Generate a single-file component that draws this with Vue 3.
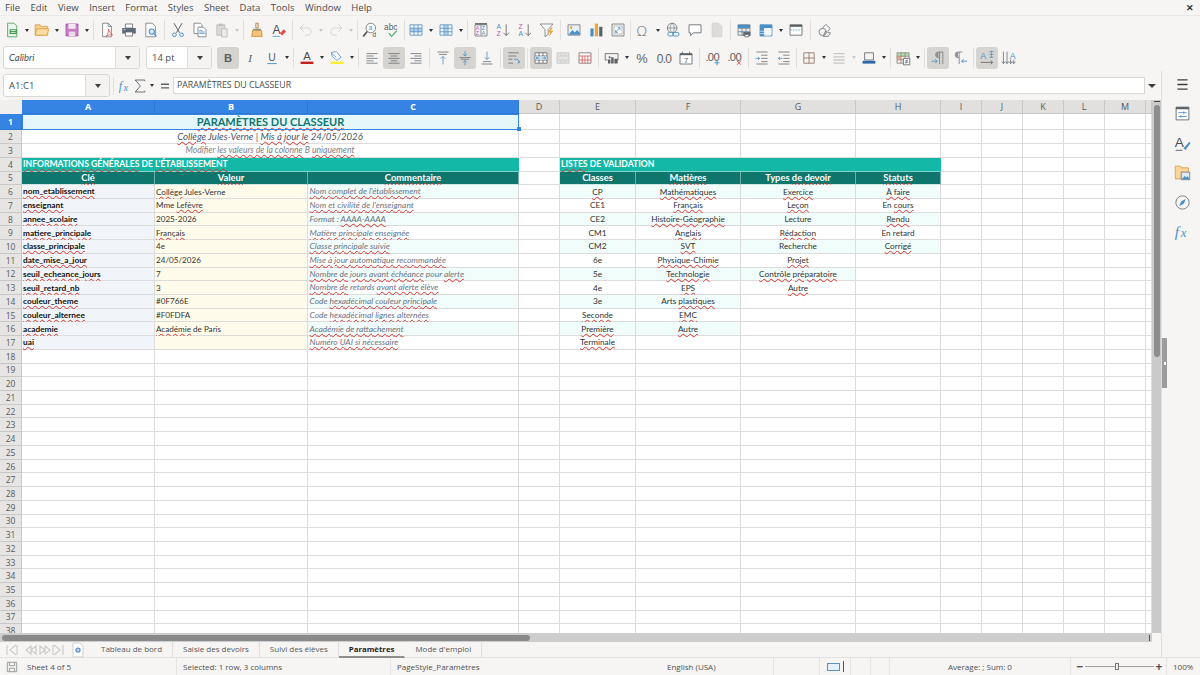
<template>
  <div class="app">
    <div class="menubar">
      <span v-for="m in menus" :key="m" class="menu">{{ m }}</span>
      <span class="close">&#x2715;</span>
    </div>

    <div class="toolbar tb1">
      <template v-for="(t, i) in bar1" :key="i">
        <span v-if="t.sep" class="sep" :style="{ margin: `0 ${t.sep}px` }"></span>
        <span v-else-if="t.a" class="drop" :class="{ dim: t.dim }"></span>
        <span v-else class="btn"><svg viewBox="0 0 20 20" v-html="icons[t.i]"></svg></span>
      </template>
    </div>

    <div class="toolbar tb2">
      <div class="combo font-box">
        <span class="combo-text italic">Calibri</span>
        <span class="combo-arrow"><i></i></span>
      </div>
      <div class="combo size-box">
        <span class="combo-text">14 pt</span>
        <span class="combo-arrow"><i></i></span>
      </div>
      <template v-for="(t, i) in bar2" :key="i">
        <span v-if="t.sep" class="sep" :style="{ margin: `0 ${t.sep}px` }"></span>
        <span v-else-if="t.a" class="drop" :class="{ dim: t.dim }"></span>
        <span v-else class="btn" :class="{ on: t.on }"><svg viewBox="0 0 20 20" v-html="icons[t.i]"></svg></span>
      </template>
    </div>

    <div class="main">
      <div class="workspace">
        <div class="formulabar">
          <div class="combo name-box">
            <span class="combo-text">A1:C1</span>
            <span class="combo-arrow"><i></i></span>
          </div>
          <span class="sep fsep"></span>
          <span class="btn fbtn"><svg viewBox="0 0 20 20" v-html="icons.fx"></svg></span>
          <span class="btn fbtn sumb"><svg viewBox="0 0 20 20" v-html="icons.sum"></svg></span>
          <span class="drop"></span>
          <span class="btn fbtn eqb"><svg viewBox="0 0 20 20" v-html="icons.equal"></svg></span>
          <div class="formula-input">PARAMÈTRES DU CLASSEUR</div>
          <span class="formula-drop"></span>
        </div>

        <div class="sheet-area">
          <div class="sheet">
            <div class="grow head-row">
              <div class="corner"></div>
              <div v-for="(c, i) in cols" :key="c" class="colhead" :class="{ sel: i < 3 }">{{ c }}</div>
              <div class="colhead rest"></div>
            </div>

            <div v-for="r in rows" :key="r.n" class="grow" :class="{ first: r.n === 1 }">
              <div class="rowhead" :class="{ sel: r.n === 1 }">{{ r.n }}</div>
              <div
                v-for="(c, i) in r.cells"
                :key="i"
                class="cell"
                :class="c.cls"
                :style="c.span ? { gridColumn: `span ${c.span}` } : null"
              >
                <span class="cell-text">
                  <template v-for="(p, j) in parts(c.t)" :key="j">
                    <span v-if="p.wavy" class="wavy">{{ p.s }}</span>
                    <template v-else>{{ p.s }}</template>
                  </template>
                </span>
                <span v-if="r.n === 1 && i === 0" class="handle"></span>
              </div>
            </div>
          </div>
          <div class="vscroll"><span class="vgrip"></span><span class="vthumb"></span></div>
        </div>

        <div class="hscroll"><span class="hthumb"></span><span class="hgrip"></span></div>
      </div>

      <div class="sidebar">
        <span v-for="s in sideIcons" :key="s" class="side-btn"><svg viewBox="0 0 20 20" v-html="icons[s]"></svg></span>
        <span class="side-grip"><i></i></span>
      </div>
    </div>

    <div class="tabbar">
      <div class="tab-nav">
        <svg viewBox="0 0 60 14">
          <g fill="none" stroke="#cfcdca" stroke-width="1.2">
            <path d="M2 2v10M11 2 5 7l6 5M12 2v10" />
            <path d="M26 3l-5 4 5 4zM31 3l-5 4 5 4z" />
            <path d="M35 3l5 4-5 4zM40 3l5 4-5 4z" />
            <path d="M49 2l6 5-6 5M48 2v10M58 2v10" />
          </g>
        </svg>
      </div>
      <span class="tab-add"><svg viewBox="0 0 12 16"><path d="M1 1h7l3 3v11H1z" fill="#fff" stroke="#d0cfcc" /><circle cx="6" cy="8" r="2.6" fill="#4f86c6" /><path d="M6 6.4v3.2M4.4 8h3.2" stroke="#fff" stroke-width=".8" /></svg></span>
      <div v-for="(t, i) in tabs" :key="t" class="tab" :class="{ active: i === 3 }">{{ t }}</div>
      <span class="tab-rest"></span>
    </div>

    <div class="statusbar">
      <span class="st st-save"><svg viewBox="0 0 14 14"><path d="M1.5 1.5h11v11h-11z" fill="none" stroke="#8b8d8f" /><path d="M4 2v3.5h6V2M4 12.5V8.500h6v4" fill="none" stroke="#8b8d8f" /></svg></span>
      <span class="st st-sheet">Sheet 4 of 5</span>
      <span class="st st-sel">Selected: 1 row, 3 columns</span>
      <span class="st st-page">PageStyle_Paramètres</span>
      <span class="st st-lang">English (USA)</span>
      <span class="st st-e0"></span>
      <span class="st st-mode"><i class="sel-rect"></i><i class="ibeam"></i></span>
      <span class="st st-e1"></span>
      <span class="st st-e2"></span>
      <span class="st st-sum">Average: ; Sum: 0</span>
      <span class="st st-zoom">
        <span class="zm">&minus;</span>
        <span class="zslider"><i></i></span>
        <span class="zm">+</span>
      </span>
      <span class="st-pct">100%</span>
    </div>
  </div>
</template>

<script setup>
const menus = ['File', 'Edit', 'View', 'Insert', 'Format', 'Styles', 'Sheet', 'Data', 'Tools', 'Window', 'Help']

const blue = '#4a90c8'
const dark = '#6a6e72'
const linesOf = (arr, c = dark) =>
  `<path d="${arr.map(([y, a, b]) => `M${a} ${y}H${b}`).join('')}" stroke="${c}" stroke-width="1" fill="none"/>`
const gridIcon = (c, hl = '') =>
  `<path d="M2.5 3.5h15v13h-15zM2.5 7.8h15M2.5 12.2h15M7.5 3.5v13M12.5 3.5v13" fill="${hl || 'none'}" stroke="${c}" stroke-width="1"/>`

const icons = {
  new: `<path d="M4.5 1.5h8l3.5 3.5v13.5H4.5z" fill="#e9f5ea" stroke="#4c9a55"/><path d="M7 9h9v6H7z" fill="#3f9a4b"/><path d="M8.5 10.5h6M8.5 13h6" stroke="#fff"/>`,
  open: `<path d="M1.5 5.5V3.5h6l1.5 2h8v11H1.500z" fill="#f7cf8e" stroke="#d89b47"/><path d="M1.5 16.5l2-8h15l-2 8z" fill="#fbdd9d" stroke="#d89b47"/>`,
  save: `<path d="M2.5 2.5h15v15h-15z" fill="#c77dc6" stroke="#a64fa8"/><path d="M5.5 2.5h9v6h-9z" fill="#f5e7f5"/><path d="M6 12h8v5.5H6z" fill="#eddaee"/>`,
  pdf: `<path d="M4.5 1.5h7l4 4v13h-11z" fill="#fff" stroke="#70767a"/><path d="M11.5 1.5v4h4" fill="none" stroke="#70767a"/><path d="M9 18c2-3 3-6 3-9 1 3 2 5 5 7-3-.5-5 0-8 2z" fill="none" stroke="#d9534f"/>`,
  print: `<path d="M5.5 2.5h9v5h-9z" fill="#fff" stroke="#666"/><path d="M1.5 7.5h17v7h-17z" fill="#5c6b77"/><path d="M5.5 12.5h9v5h-9z" fill="#fff" stroke="#666"/><path d="M3.5 9.500h2" stroke="#fff"/>`,
  preview: `<path d="M3.5 1.5h8l4 4v13h-12z" fill="#fff" stroke="#70767a"/><circle cx="11" cy="12" r="3.3" fill="#dcebf6" stroke="${blue}" stroke-width="1.3"/><path d="M13.5 14.5l3.5 3.5" stroke="${blue}" stroke-width="1.6"/>`,
  cut: `<path d="M5 1.5l7 12M15 1.5l-7 12" stroke="#5c6166" stroke-width="1.2" fill="none"/><circle cx="5.5" cy="16" r="2.3" fill="none" stroke="${blue}" stroke-width="1.2"/><circle cx="14.5" cy="16" r="2.3" fill="none" stroke="${blue}" stroke-width="1.2"/>`,
  copy: `<path d="M2.5 1.5h8l2 2v11h-10z" fill="#fff" stroke="#70767a"/><path d="M7.5 6.5h7l3 3v9h-10z" fill="#fff" stroke="#70767a"/>${linesOf([[10.5, 9, 13], [12.5, 9, 16], [14.5, 9, 16]], blue)}`,
  paste: `<path d="M3.5 3.5h10v13h-10z" fill="#d8d8d6" stroke="#b8b8b6"/><path d="M6 2h5v3H6z" fill="#c0c0be"/><path d="M9.5 8.5h7v10h-7z" fill="#eaeae8" stroke="#b8b8b6"/>`,
  brush: `<path d="M8.500 1.5h3v6h-3z" fill="#f7e8c8" stroke="#a77c3c"/><path d="M5 8.5h10v2H5z" fill="#8a8f94"/><path d="M4.5 10.5h11l1 7.5h-13z" fill="#f4c27a" stroke="#c98a2e"/>`,
  clear: `<text x="2" y="15" font-size="15" font-family="Liberation Sans" fill="#4a4f54">A</text><path d="M11 14l5-5 3 3-5 5z" fill="#e2504c"/><path d="M2 18h9" stroke="${blue}"/>`,
  undo: `<path d="M7 3L2.5 7.5 7 12M3 7.5h9c6 0 6 9 0 9H9" fill="none" stroke="#d5d3d0" stroke-width="1.200"/>`,
  redo: `<path d="M13 3l4.5 4.5L13 12M17 7.5H8c-6 0-6 9 0 9h3" fill="none" stroke="#d5d3d0" stroke-width="1.200"/>`,
  find: `<circle cx="11" cy="7.5" r="6" fill="#fff" stroke="#6a7075"/><path d="M6.5 12L1.5 18" stroke="#4a4f54" stroke-width="2"/><text x="8.3" y="10" font-size="8" font-family="Liberation Sans" fill="${blue}">a</text><text x="13" y="19" font-size="8" font-family="Liberation Sans" fill="#4a4f54">d</text>`,
  spell: `<text x="0" y="10" font-size="10.5" font-family="Liberation Sans" fill="#5a5f63">abc</text><path d="M6 14l3.5 4L16 11" fill="none" stroke="#55b06a" stroke-width="1.6"/>`,
  tableRow: gridIcon(blue) + `<path d="M2.5 8h15v4h-15z" fill="${blue}" opacity=".35"/>`,
  tableCol: gridIcon(blue) + `<path d="M8 3.5h4v13H8z" fill="${blue}" opacity=".35"/>`,
  sort: `<path d="M2.5 2.5h15" stroke="#555" stroke-width="2"/><path d="M2.5 3.5h15v14h-15z" fill="#f6f5f4" stroke="#777"/><path d="M10 4v13" stroke="#777"/><text x="3.5" y="10" font-size="6.5" font-family="Liberation Sans" fill="#c04fc0">A</text><text x="3.5" y="16.5" font-size="6.5" font-family="Liberation Sans" fill="#c04fc0">Z</text><text x="11" y="10" font-size="6.5" font-family="Liberation Sans" fill="${blue}">Z</text><text x="11" y="16.5" font-size="6.5" font-family="Liberation Sans" fill="${blue}">A</text>`,
  sortAsc: `<text x="2" y="9" font-size="8.5" font-family="Liberation Sans" fill="${blue}">A</text><text x="2" y="18" font-size="8.5" font-family="Liberation Sans" fill="#c04fc0">Z</text><path d="M14 3v14M10.5 13.5L14 17l3.5-3.5" fill="none" stroke="#666" stroke-width="1.1"/>`,
  sortDesc: `<text x="2" y="9" font-size="8.5" font-family="Liberation Sans" fill="#c04fc0">Z</text><text x="2" y="18" font-size="8.5" font-family="Liberation Sans" fill="${blue}">A</text><path d="M14 3v14M10.5 13.5L14 17l3.5-3.5" fill="none" stroke="#666" stroke-width="1.1"/>`,
  filter: `<path d="M1.5 2.5h16l-6 7v6l-4 3v-9z" fill="#fff" stroke="#70767a"/><path d="M15 7l-4 6h3l-2 6 6-8h-3l2-4z" fill="#f0a63c"/>`,
  image: `<path d="M2.5 3.5h15v13h-15z" fill="#e8f1f8" stroke="#70767a"/><path d="M3 16l5-6 3 3 3-3 3.5 4v2z" fill="${blue}"/><circle cx="6.5" cy="7" r="1.6" fill="#f0a63c"/>`,
  chart: `<path d="M3 8h4v10H3z" fill="${blue}"/><path d="M8.5 2h4v16h-4z" fill="#f0a63c"/><path d="M14 6h4v12h-4z" fill="#5a5f63"/>`,
  pivot: `<path d="M2.5 2.5h15v15h-15z" fill="#eee" stroke="#70767a"/><path d="M5 5h10v10H5z" fill="#fff" stroke="#b5b5b3"/><path d="M7 13l5-6M9.5 7h3v3M10 13H7v-3" fill="none" stroke="${blue}"/>`,
  omega: `<text x="1.5" y="17" font-size="18" font-family="DejaVu Sans" font-weight="200" fill="#6a6e72">Ω</text>`,
  link: `<circle cx="9" cy="7.5" r="6" fill="none" stroke="#6a7075"/><path d="M3 7.5h12M9 1.5c-3.5 4-3.5 8 0 12M9 1.5c3.5 4 3.5 8 0 12" fill="none" stroke="#6a7075" stroke-width=".8"/><rect x="3.5" y="13" width="7" height="4.5" rx="2.2" fill="#f6f5f4" stroke="${blue}" stroke-width="1.2"/><rect x="9.5" y="13" width="8" height="4.5" rx="2.2" fill="none" stroke="${blue}" stroke-width="1.2"/>`,
  comment: `<path d="M2.5 3.5h15v10H8L4.500 17v-3.500h-2z" fill="#fff" stroke="#5a5f63"/>`,
  note: `<path d="M4 1.500h8l4 4v13H4z" fill="#dcdcda" stroke="#d0d0ce"/>`,
  printRange: gridIcon('#70767a', '#e8f1f8') + `<path d="M2.5 3.5h15v4h-15z" fill="${blue}"/><path d="M9 12.5h9v5H9z" fill="#5c6b77"/><path d="M11 15.5h5v3h-5z" fill="#fff" stroke="#666"/>`,
  freezeCols: `<path d="M2.5 3.5h15v14h-15z" fill="#e8f1f8" stroke="${blue}"/><path d="M2.5 3.5h15v4h-15z" fill="${blue}"/><path d="M2.5 3.5h5v14h-5z" fill="${blue}"/><path d="M2.5 11.5h15M2.5 14.5h15M11 8v10M14 8v10" stroke="#fff" stroke-width=".8"/>`,
  freezeRow: `<path d="M2.5 3.5h15v13h-15z" fill="#fff" stroke="#5a5f63"/><path d="M2.5 3.5h15V6h-15z" fill="#5a5f63"/><path d="M2.5 10h15" stroke="${blue}" stroke-dasharray="2 1.5"/>`,
  shapes: `<path d="M4 11l7-8 5.5 5-3 3.5" fill="#f6f5f4" stroke="#6a7075"/><circle cx="7" cy="12.500" r="4.5" fill="#f6f5f4" stroke="#6a7075"/><path d="M10 12l7 1.5-3 4.5H8z" fill="none" stroke="#6a7075"/>`,
  bold: `<text x="10" y="15" text-anchor="middle" font-size="14" font-weight="700" font-family="Liberation Sans" fill="#5a5f63">B</text>`,
  italic: `<text x="10" y="15" text-anchor="middle" font-size="14" font-style="italic" font-family="Liberation Serif" fill="#5a5f63">I</text>`,
  underline: `<text x="10" y="14" text-anchor="middle" font-size="13" font-family="Liberation Sans" fill="#5a5f63">U</text><path d="M4 17h12" stroke="${blue}" stroke-width="1.2"/>`,
  fontColor: `<text x="10" y="13" text-anchor="middle" font-size="14" font-family="Liberation Sans" fill="#4a4f54">A</text><path d="M2 14.5h16v3H2z" fill="#c9211e"/>`,
  bgColor: `<path d="M3 3l6-1 6 7-5 4-6-5z" fill="#fff" stroke="${blue}"/><path d="M3 4l6 5" stroke="${blue}"/><path d="M2 14.5h16v3H2z" fill="#ffee33"/>`,
  left: linesOf([[4.5, 3, 17], [7.5, 3, 12], [10.5, 3, 17], [13.5, 3, 12], [16.5, 3, 17]]),
  center: linesOf([[4.5, 3, 17], [7.5, 6, 14], [10.5, 3, 17], [13.5, 6, 14], [16.5, 3, 17]]),
  right: linesOf([[4.5, 3, 17], [7.5, 8, 17], [10.5, 3, 17], [13.5, 8, 17], [16.5, 3, 17]]),
  alignTop: linesOf([[2.5, 3, 17], [5.5, 5, 15]]) + `<path d="M10 18V8M7 11l3-3 3 3" fill="none" stroke="${blue}"/>`,
  alignMid: linesOf([[9.5, 3, 17], [11.5, 5, 15]]) + `<path d="M10 1.5v6M7.5 5L10 7.500 12.5 5M10 19v-6M7.5 15.5L10 13l2.5 2.5" fill="none" stroke="${blue}"/>`,
  alignBot: linesOf([[14.5, 5, 15], [17.5, 3, 17]]) + `<path d="M10 2v10M7 9l3 3 3-3" fill="none" stroke="${blue}"/>`,
  wrap: linesOf([[3.5, 3, 16], [7.5, 3, 13], [11.5, 3, 8], [16.5, 3, 9]]) + `<path d="M10 11.5h4l3 3.5-2 1M15 13l2 2-2 2" fill="none" stroke="${blue}"/>`,
  merge: `<path d="M2.5 3.5h15v13h-15zM2.5 7.5h15M2.5 12.5h15M7.5 3.5v4M12.5 3.5v4M7.5 12.5v4M12.5 12.5v4" fill="#fff" stroke="#5a5f63"/><path d="M3 8h14v4H3z" fill="#cfe2f1"/><path d="M4 10h4M16 10h-4M6 8.5L4 10l2 1.5M14 8.5l2 1.5-2 1.5" fill="none" stroke="${blue}"/>`,
  mergeC: `<path d="M2.5 3.5h15v13h-15zM2.5 7.5h15M2.5 12.5h15M7.5 3.5v4M12.5 3.5v4M7.5 12.5v4M12.5 12.5v4" fill="#e4e4e2" stroke="#c8c8c6"/>`,
  unmerge: `<path d="M2.5 3.5h15v13h-15z" fill="#fff" stroke="#7a6a6a"/><path d="M2.5 7.5h15M2.5 12.5h15M6.5 7.5v9M10 7.5v9M13.5 7.5v9" stroke="#d9534f" fill="none"/>`,
  numFmt: `<path d="M1.5 4.5h16v8h-1M1.5 4.5v8h3" fill="none" stroke="#5a5f63"/><path d="M5 12h3v5H5zM9 9h3v8H9zM13 11h4v6h-4z" fill="#5a5f63"/><circle cx="7" cy="9" r="1.3" fill="#5a5f63"/>`,
  percent: `<text x="10" y="16" text-anchor="middle" font-size="16" font-family="Liberation Sans" fill="#5a5f63">%</text>`,
  zero: `<text x="10" y="16" text-anchor="middle" font-size="15" font-family="Liberation Sans" fill="#5a5f63" letter-spacing="-1">0.0</text>`,
  date: `<path d="M2.5 4.5h15v13h-15z" fill="#fff" stroke="#5a5f63"/><path d="M2.5 4.5h15v2h-15z" fill="#5a5f63"/><path d="M5.5 2v3M14.5 2v3" stroke="#5a5f63"/><text x="10" y="15.8" text-anchor="middle" font-size="9.5" font-family="Liberation Sans" fill="#5a5f63">7</text>`,
  decAdd: `<text x="9" y="14" text-anchor="middle" font-size="14" font-family="Liberation Sans" fill="#5a5f63" letter-spacing="-.8">.00</text><path d="M15 13v6M12 16h6" stroke="${blue}" stroke-width="1.2"/>`,
  decDel: `<text x="9" y="14" text-anchor="middle" font-size="14" font-family="Liberation Sans" fill="#5a5f63" letter-spacing="-.8">.00</text><path d="M12.500 13.500l5 5M17.500 13.500l-5 5" stroke="#d9534f" stroke-width="1.2"/>`,
  indent: linesOf([[2.5, 3, 17], [6.5, 9, 17], [10.5, 9, 17], [14.5, 9, 17], [17.5, 3, 17]]) + `<path d="M2 10.5h5M5 8.5l2 2-2 2" fill="none" stroke="${blue}"/>`,
  outdent: linesOf([[2.5, 3, 17], [6.5, 9, 17], [10.5, 9, 17], [14.5, 9, 17], [17.5, 3, 17]]) + `<path d="M8 10.5H3M5 8.5l-2 2 2 2" fill="none" stroke="${blue}"/>`,
  borders: `<path d="M3.5 3.5h13v13h-13zM3.5 10h13M10 3.5v13" fill="none" stroke="#8a6a55"/>`,
  borderStyle: `<path d="M3 4.5h14M3 8.5h14M3 12.5h14M3 16.5h14" stroke="#c9c8c6" stroke-width="1.6"/>`,
  borderColor: `<path d="M4.5 3.5h11v9h-11z" fill="none" stroke="#5a5f63"/><path d="M2 13.5h16V17H2z" fill="#2a66a8"/>`,
  cond: gridIcon('#8a7a6a') + `<path d="M2.5 3.5h15v4h-15z" fill="#7ab87a" opacity=".5"/><path d="M2.5 8h5v4h-5z" fill="#e08a7a" opacity=".7"/><path d="M10.5 10.5h8v8h-8z" fill="#fff" stroke="#5a5f63"/><path d="M12.5 13.5h4M12.5 15.5h4M15.5 12l-2 5" stroke="#5a5f63" stroke-width=".8"/>`,
  ltr: `<path d="M16 2.5H10.500a3.5 3.5 0 000 7H12M12 2.5v15M16 2.5v15" fill="none" stroke="#73777b"/><path d="M10.500 2.800c-4 .2-4 6.500 0 6.500z" fill="#8b8e91"/><path d="M2 14h7M6.5 11.500L9 14l-2.500 2.500" fill="none" stroke="${blue}" stroke-width="1.1"/>`,
  rtl: `<path d="M13 2.5H7.500a3.5 3.5 0 000 7H9M9 2.5v15" fill="none" stroke="#73777b"/><path d="M7.500 2.800c-4 .2-4 6.500 0 6.500z" fill="#8b8e91"/><path d="M19 14h-7M14.500 11.500L12 14l2.500 2.500" fill="none" stroke="${blue}" stroke-width="1.1"/>`,
  horiz: `<text x="1.5" y="11" font-size="11" font-family="Liberation Sans" fill="${blue}">A</text><path d="M13 2h5M13 5.5h5M13 9h5M15.5 1v9" stroke="${blue}" stroke-width=".9" fill="none"/><path d="M2 15.5h15M14.5 13l2.500 2.500-2.500 2.500" fill="none" stroke="#5a5f63"/>`,
  vert: `<text x="11" y="11" font-size="11" font-family="Liberation Sans" fill="${blue}">A</text><path d="M3 2v15M1 14.500L3 17l2-2.500M7.5 2v15M5.500 14.500L7.5 17l2-2.500M12 12v5M10 14.500l2 2.500 2-2.500M16 12v5M14 14.500l2 2.500 2-2.500" fill="none" stroke="#5a5f63" stroke-width=".9"/>`,
  fx: `<text x="1" y="15" font-size="15" font-style="italic" font-family="Liberation Serif" fill="${blue}">f</text><text x="7" y="16" font-size="13" font-style="italic" font-family="Liberation Serif" fill="${blue}">x</text>`,
  sum: `<path d="M16 4V2.500H4L10.500 10 4 17.500h12V16" fill="none" stroke="#5a5f63" stroke-width="1.1"/>`,
  equal: `<path d="M5 7h10v1.600H5zM5 11.500h10v1.600H5z" fill="#5a5f63"/>`,
  hamburger: `<path d="M4 4.500h12M4 10h12M4 15.500h12" stroke="#3d4145" stroke-width="1.5"/>`,
  properties: `<path d="M2.5 2.5h15v15h-15z" fill="#fff" stroke="#5a5f63"/><path d="M2.5 2.5h15v2.500h-15z" fill="#5a5f63"/><path d="M5 9h10M5 13.500h10M11.500 7.500v3M8 12v3" stroke="${blue}" fill="none"/>`,
  styles: `<text x="1" y="14.500" font-size="16" font-family="Liberation Sans" fill="#4a4f54">A</text><path d="M11 16l7-8 1.500 1.500-6 8z" fill="${blue}"/><path d="M2 18h8" stroke="#4a4f54"/>`,
  gallery: `<path d="M1.500 5V2.500h6L9 4.500h8v13H1.500z" fill="#f9d79b" stroke="#d89b47"/><path d="M8.500 9.500h10v9h-10z" fill="#dcebf6" stroke="#70767a"/><path d="M9 18l3.500-4 2 2 1.500-1.500 2.500 3.500z" fill="${blue}"/>`,
  navigator: `<circle cx="10" cy="10" r="7.800" fill="none" stroke="#6a7075"/><path d="M14 6l-2.500 5.500L6 14l2.500-5.500z" fill="${blue}"/>`,
  fxBig: `<text x="1" y="16" font-size="18" font-style="italic" font-family="Liberation Serif" fill="${blue}">f</text><text x="8" y="17" font-size="15" font-style="italic" font-family="Liberation Serif" fill="${blue}">x</text>`,
}

const A = { a: 1 }
const bar1 = [
  { i: 'new' }, A, { i: 'open' }, A, { i: 'save' }, A, { sep: 2 },
  { i: 'pdf' }, { i: 'print' }, { i: 'preview' }, { sep: 2 },
  { i: 'cut' }, { i: 'copy' }, { i: 'paste' }, { a: 1, dim: 1 }, { sep: 2 },
  { i: 'brush' }, { i: 'clear' }, { sep: 2 },
  { i: 'undo' }, { a: 1, dim: 1 }, { i: 'redo' }, { a: 1, dim: 1 }, { sep: 1.5 },
  { i: 'find' }, { i: 'spell' }, { sep: 0.5 },
  { i: 'tableRow' }, A, { i: 'tableCol' }, A, { sep: 2 },
  { i: 'sort' }, { i: 'sortAsc' }, { i: 'sortDesc' }, { i: 'filter' }, { sep: 2 },
  { i: 'image' }, { i: 'chart' }, { i: 'pivot' }, { sep: 1 },
  { i: 'omega' }, A, { i: 'link' }, { i: 'comment' }, { i: 'note' }, { sep: 2 },
  { i: 'printRange' }, { i: 'freezeCols' }, A, { i: 'freezeRow' }, { sep: 3 },
  { i: 'shapes' },
]
const bar2 = [
  { i: 'bold', on: 1 }, { i: 'italic' }, { i: 'underline' }, A, { sep: 2 },
  { i: 'fontColor' }, A, { i: 'bgColor' }, A, { sep: 2 },
  { i: 'left' }, { i: 'center', on: 1 }, { i: 'right' }, { sep: 2 },
  { i: 'alignTop' }, { i: 'alignMid', on: 1 }, { i: 'alignBot' }, { sep: 2 },
  { i: 'wrap', on: 1 }, { sep: 2 }, { i: 'merge', on: 1 }, { i: 'mergeC' }, { i: 'unmerge' }, { sep: 2 },
  { i: 'numFmt' }, A, { i: 'percent' }, { i: 'zero' }, { i: 'date' }, { sep: 2 },
  { i: 'decAdd' }, { i: 'decDel' }, { sep: 2 },
  { i: 'indent' }, { i: 'outdent' }, { sep: 1 },
  { i: 'borders' }, A, { i: 'borderStyle' }, { a: 1, dim: 1 }, { i: 'borderColor' }, A, { sep: 1.5 },
  { i: 'cond' }, A, { sep: 2 },
  { i: 'ltr', on: 1 }, { i: 'rtl' }, { sep: 2 },
  { i: 'horiz', on: 1 }, { i: 'vert' },
]

const sideIcons = ['hamburger', 'properties', 'styles', 'gallery', 'navigator', 'fxBig']
const tabs = ['Tableau de bord', 'Saisie des devoirs', 'Suivi des élèves', 'Paramètres', "Mode d'emploi"]
const cols = ['A', 'B', 'C', 'D', 'E', 'F', 'G', 'H', 'I', 'J', 'K', 'L', 'M']

// *...* marks the words the spell checker underlines
const params = [
  ['*nom_etablissement*', '*Collège* Jules-Verne', "*Nom complet de l'établissement*"],
  ['*enseignant*', 'Mme *Lefèvre*', "*Nom et civilité de l'enseignant*"],
  ['*annee_scolaire*', '2025-2026', 'Format : *AAAA-AAAA*'],
  ['*matiere_principale*', '*Français*', '*Matière principale enseignée*'],
  ['*classe_principale*', '4e', '*Classe principale suivie*'],
  ['*date_mise_a_jour*', '24/05/2026', '*Mise à jour automatique recommandée*'],
  ['*seuil_echeance_jours*', '7', '*Nombre de jours avant échéance* pour *alerte*'],
  ['*seuil_retard_nb*', '3', '*Nombre de* retards *avant alerte élève*'],
  ['*couleur_theme*', '#0F766E', 'Code *hexadécimal couleur principale*'],
  ['*couleur_alternee*', '#F0FDFA', 'Code *hexadécimal lignes alternées*'],
  ['*academie*', '*Académie* de Paris', '*Académie de rattachement*'],
  ['*uai*', '', '*Numéro UAI si nécessaire*'],
]
const lists = [
  ['*CP*', 'CE1', 'CE2', 'CM1', 'CM2', '6e', '5e', '4e', '3e', '*Seconde*', '*Première*', '*Terminale*'],
  ['*Mathématiques*', '*Français*', '*Histoire-Géographie*', '*Anglais*', '*SVT*', '*Physique-Chimie*', '*Technologie*', '*EPS*', 'Arts *plastiques*', '*EMC*', '*Autre*'],
  ['*Exercice*', '*Leçon*', 'Lecture', '*Rédaction*', 'Recherche', '*Projet*', '*Contrôle préparatoire*', '*Autre*'],
  ['*À faire*', 'En *cours*', '*Rendu*', 'En retard', '*Corrigé*'],
]

const parts = (t) =>
  (t || '').split('*').map((s, i) => ({ s, wavy: i % 2 === 1 })).filter((p) => p.s)

const blanks = (n) => Array.from({ length: n }, () => ({ t: '' }))

const buildRow = (n) => {
  if (n === 1) return [{ t: '*PARAMÈTRES DU CLASSEUR*', span: 3, cls: 'title' }, ...blanks(11)]
  if (n === 2) return [{ t: '*Collège* Jules-Verne | *Mis à jour le* 24/05/2026', span: 3, cls: 'subtitle' }, ...blanks(11)]
  if (n === 3) return [{ t: 'Modifier *les valeurs de la colonne* B *uniquement*', span: 3, cls: 'hint' }, ...blanks(11)]
  if (n === 4) {
    return [
      { t: "*INFORMATIONS GÉNÉRALES* DE *L'ÉTABLISSEMENT*", span: 3, cls: 'section' },
      { t: '' },
      { t: '*LISTES* DE VALIDATION', span: 4, cls: 'section' },
      ...blanks(6),
    ]
  }
  if (n === 5) {
    const heads = ['*Clé*', '*Valeur*', '*Commentaire*']
    const heads2 = ['Classes', '*Matières*', 'Types *de devoir*', '*Statuts*']
    return [
      ...heads.map((t) => ({ t, cls: 'thead' })),
      { t: '' },
      ...heads2.map((t) => ({ t, cls: 'thead' })),
      ...blanks(6),
    ]
  }
  const idx = n - 6
  const p = params[idx]
  const zebra = idx % 2 === 0
  const cells = []
  if (p) {
    cells.push({ t: p[0], cls: 'key' }, { t: p[1], cls: 'val' }, { t: p[2], cls: ['note', { alt: zebra }] })
  } else {
    cells.push(...blanks(3))
  }
  cells.push({ t: '' })
  lists.forEach((l) => {
    const t = l[idx]
    cells.push(t ? { t, cls: ['list', { alt: zebra }] } : { t: '' })
  })
  cells.push(...blanks(6))
  return cells
}

const rows = Array.from({ length: 38 }, (_, i) => ({ n: i + 1, cells: buildRow(i + 1) }))
</script>

<style>
html, body { margin: 0; padding: 0; overflow: hidden; }
</style>

<style scoped>
.app {
  width: 1200px;
  height: 675px;
  display: flex;
  flex-direction: column;
  overflow: hidden;
  background: #f6f5f4;
  color: #3d3f41;
  font-family: "Open Sans", "Noto Sans", sans-serif;
  font-size: 9.5px;
}

.menubar {
  height: 16px;
  box-sizing: border-box;
  flex: none;
  display: flex;
  align-items: center;
  padding-left: 5px;
  gap: 10.5px;
  border-bottom: 1px solid #eceae8;
  position: relative;
}
.menu { font-size: 9.5px; color: #4a4c4e; }
.close { position: absolute; right: 6px; top: 1px; font-size: 9px; font-weight: 700; color: #333; }

.toolbar { flex: none; display: flex; align-items: center; }
.tb1 { height: 28px; padding-left: 1px; }
.tb2 { height: 27px; padding-left: 3px; }

.btn {
  width: 22px;
  height: 22px;
  flex: none;
  display: flex;
  align-items: center;
  justify-content: center;
  border-radius: 3px;
}
.btn svg { width: 16px; height: 16px; display: block; overflow: visible; }
.btn.on { background: #d6d4d1; }

.drop { width: 8px; height: 22px; flex: none; display: flex; align-items: center; justify-content: center; }
.drop::after {
  content: "";
  border-left: 2.5px solid transparent;
  border-right: 2.5px solid transparent;
  border-top: 3px solid #2e3436;
}
.drop.dim::after { border-top-color: #c9c8c6; }

.sep { width: 1px; height: 20px; flex: none; background: #e2e0de; }

.combo {
  height: 23px;
  flex: none;
  display: flex;
  align-items: stretch;
  box-sizing: border-box;
  border: 1px solid #dad8d5;
  border-radius: 3px;
  background: #fff;
  overflow: hidden;
}
.combo-text { flex: 1; padding-left: 5px; display: flex; align-items: center; font-size: 9.5px; color: #4a4c4e; }
.combo-text.italic { font-style: italic; font-family: "Lato", sans-serif; }
.combo-arrow {
  width: 23px;
  background: #f4f3f1;
  border-left: 1px solid #dfddda;
  display: flex;
  align-items: center;
  justify-content: center;
}
.combo-arrow i {
  border-left: 3.5px solid transparent;
  border-right: 3.5px solid transparent;
  border-top: 4px solid #3d3f41;
}
.font-box { width: 137px; margin-right: 6px; }
.size-box { width: 66px; margin-right: 5px; }

.main { flex: 1; min-height: 0; display: flex; }
.workspace { width: 1161px; flex: none; display: flex; flex-direction: column; }

.formulabar { height: 29px; flex: none; display: flex; align-items: center; padding-left: 3px; }
.name-box { width: 107px; }
.fsep { margin: 0 2px 0 3px; height: 18px; }
.fbtn { width: 20px; }
.sumb { width: 16px; margin-left: -4px; }
.eqb { width: 17px; }
.formula-input {
  width: 972px;
  height: 17px;
  box-sizing: border-box;
  background: #fff;
  border: 1px solid #dad8d5;
  padding-left: 3px;
  line-height: 15px;
  font-size: 8.8px;
  color: #4a4c4e;
  flex: none;
}
.formula-drop {
  margin-left: 3px;
  border-left: 4px solid transparent;
  border-right: 4px solid transparent;
  border-top: 4px solid #3d3f41;
}

.sheet-area { flex: 1; min-height: 0; display: flex; overflow: hidden; }
.sheet {
  width: 1152px;
  flex: none;
  overflow: hidden;
  background: #fff;
  font-family: "Lato", sans-serif;
  font-size: 8.2px;
}
.grow {
  display: grid;
  grid-template-columns: 22px 133px 153px 211px 41px 76px 105px 115px 85px 41px 41px 41px 41px 41px 6px;
  height: 13.73px;
}
.grow.first { height: 16.4px; }
.grow.head-row { height: 14px; }

.corner { background: #f0efee; }
.colhead {
  box-sizing: border-box;
  background: #e1e0de;
  border-right: 1px solid #c9c8c6;
  border-bottom: 1px solid #c9c8c6;
  text-align: center;
  line-height: 13px;
  font-size: 9px;
  color: #56595c;
  font-family: "Open Sans", sans-serif;
}
.colhead.sel {
  background: #3584e4;
  color: #fff;
  font-weight: 700;
  border-right-color: #2f77cf;
  border-bottom-color: #2f77cf;
}
.rowhead {
  box-sizing: border-box;
  background: #e6e5e3;
  border-right: 1px solid #c9c8c6;
  border-bottom: 1px solid #c9c8c6;
  text-align: center;
  font-family: "Open Sans", sans-serif;
  font-size: 8.5px;
  color: #56595c;
  display: flex;
  align-items: center;
  justify-content: center;
}
.rowhead.sel { background: #3584e4; color: #fff; font-weight: 700; border-color: #2f77cf; }

.cell {
  box-sizing: border-box;
  min-width: 0;
  border-right: 1px solid #dcdcdc;
  border-bottom: 1px solid #dcdcdc;
  display: flex;
  align-items: center;
  padding: 0 1px;
  white-space: nowrap;
  position: relative;
  color: #333;
  line-height: 1;
}
.cell-text { display: block; }
.wavy {
  text-decoration: underline wavy #d9362f;
  text-decoration-thickness: 0.6px;
  text-underline-offset: 0.5px;
}

.title {
  justify-content: center;
  background: #e5f7f9;
  color: #0f766e;
  font-weight: 700;
  font-size: 11px;
  outline: 1px solid #3584e4;
  outline-offset: -1px;
  border: none;
  border-bottom: 1px solid #3584e4;
}
.handle {
  position: absolute;
  right: -2px;
  bottom: -2px;
  width: 4px;
  height: 4px;
  background: #3584e4;
  z-index: 2;
}
.subtitle { justify-content: center; font-style: italic; font-size: 9.6px; color: #4b5563; }
.hint { justify-content: center; font-style: italic; font-size: 8.6px; color: #7c8087; }
.section {
  background: #14b8a6;
  color: #fff;
  font-weight: 700;
  font-size: 8.6px;
  border-right-color: #14b8a6;
  border-bottom-color: #7fd6cb;
}
.thead {
  justify-content: center;
  background: #0f766e;
  color: #fff;
  font-weight: 700;
  font-size: 9.4px;
  border-right-color: #6db0aa;
  border-bottom-color: #cfe8e5;
}
.key { background: #f1f5f9; color: #111; font-weight: 700; font-size: 8.3px; }
.val { background: #fffbeb; color: #333; font-size: 8.1px; }
.note { font-style: italic; color: #6b7280; padding-left: 1.5px; font-size: 8.45px; }
.list { justify-content: center; color: #333; font-size: 8.25px; }
.alt { background: #f0fdfa; }

.vscroll {
  width: 9px;
  flex: none;
  background: #cacaca;
  display: flex;
  flex-direction: column;
  align-items: center;
}
.vgrip { width: 6px; height: 1px; background: #444; margin-top: 1px; flex: none; }
.vthumb { width: 6px; height: 252px; flex: none; margin-top: 3px; background: #8d8d8d; border-radius: 3px; }

.hscroll {
  height: 9px;
  flex: none;
  width: 1152px;
  background: #cdcdcd;
  position: relative;
  display: flex;
  align-items: center;
}
.hthumb { width: 528px; height: 6px; margin-left: 2px; background: #8a8a8a; border-radius: 3px; }
.hgrip { position: absolute; right: 2px; top: 1.5px; width: 1px; height: 6px; background: #555; }

.sidebar {
  flex: 1;
  border-left: 1px solid #e0dedc;
  display: flex;
  flex-direction: column;
  align-items: center;
  padding-top: 3px;
  padding-left: 2px;
  gap: 9.5px;
  position: relative;
}
.side-btn { width: 20px; height: 20px; display: flex; align-items: center; justify-content: center; }
.side-btn svg { width: 17px; height: 17px; display: block; overflow: visible; }
.side-grip {
  position: absolute;
  left: 0;
  top: 267px;
  width: 5px;
  height: 50px;
  background: #9c9c9c;
  display: flex;
  align-items: center;
  justify-content: center;
}
.side-grip i { width: 2px; height: 3px; background: #fff; display: block; }

.tabbar {
  height: 16px;
  box-sizing: border-box;
  flex: none;
  display: flex;
  align-items: center;
  border-bottom: 1px solid #e4e2e0;
}
.tab-nav { width: 72px; flex: none; padding-left: 5px; box-sizing: border-box; }
.tab-nav svg { width: 60px; height: 14px; display: block; }
.tab-add { width: 12px; height: 16px; flex: none; margin-right: 7px; }
.tab-add svg { width: 12px; height: 16px; display: block; }
.tab {
  height: 15px;
  line-height: 14px;
  padding: 0 10px;
  flex: none;
  font-size: 8px;
  color: #55585a;
  border-right: 1px solid #e0dedc;
  box-sizing: border-box;
}
.tab.active {
  color: #222;
  font-weight: 700;
  font-size: 7.8px;
  border-bottom: 2px solid #8e8e8e;
  border-right-color: transparent;
  height: 16px;
}
.tab-rest { margin-left: auto; width: 39px; height: 16px; border-left: 1px solid #e0dedc; box-sizing: border-box; }

.statusbar {
  height: 17px;
  flex: none;
  display: flex;
  align-items: center;
  font-size: 8px;
  color: #4e5052;
}
.st { height: 100%; box-sizing: border-box; display: flex; align-items: center; flex: none; border-right: 1px solid #e6e4e2; }
.st-save { width: 22px; padding-left: 6px; border: none; }
.st-save svg { width: 12px; height: 12px; }
.st-sheet { width: 155px; padding-left: 5px; }
.st-sel { width: 214px; padding-left: 6px; }
.st-page { width: 271px; padding-left: 6px; border: none; }
.st-lang { width: 112px; padding-left: 5px; }
.st-e0 { width: 46px; }
.st-mode { width: 31px; padding-left: 7px; gap: 3px; justify-content: flex-start; }
.sel-rect { width: 11px; height: 6px; border: 1px solid #5a90c0; background: #e6f0f8; display: block; }
.ibeam { width: 1px; height: 11px; background: #555; display: block; }
.st-e1 { width: 20px; }
.st-e2 { width: 19px; }
.st-sum { width: 181px; justify-content: center; }
.st-zoom { width: 96px; padding: 0 3px 0 5px; gap: 1px; }
.zm { font-size: 12px; font-weight: 700; line-height: 1; width: 8px; text-align: center; }
.zslider { flex: 1; height: 1px; background: #a0a0a0; position: relative; display: block; }
.zslider i { position: absolute; left: 30px; top: -3px; width: 2px; height: 5px; border: 1px solid #777; background: #eee; }
.st-pct { margin-left: 6px; font-size: 8px; }
</style>
